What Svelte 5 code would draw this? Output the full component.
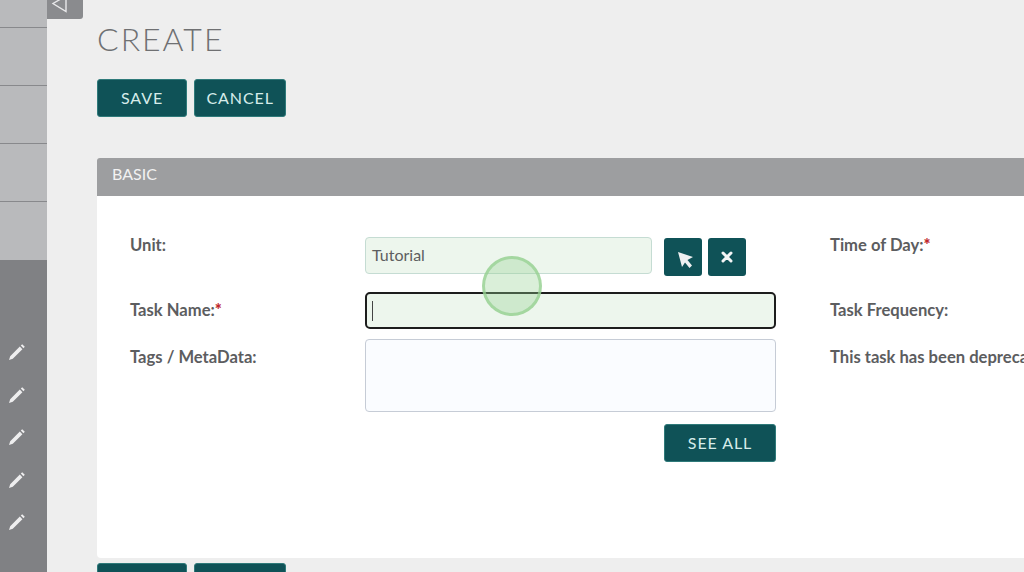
<script>
	const navItems = [28, 58, 58, 58, 58]
	const pencils = [1, 2, 3, 4, 5]
	const actions = ['SAVE', 'CANCEL']
</script>

<div class="page">
	<aside class="sidebar">
		<div class="nav">
			{#each navItems as h}
				<div class="nav-item" style="height: {h}px"></div>
			{/each}
		</div>
		<div class="tools">
			{#each pencils as p}
				<svg class="pencil" viewBox="0 0 18 18" width="18" height="18">
					<path d="M1 17 L2.2 13.2 L11.8 3.6 L14.4 6.2 L4.8 15.8 Z M12.8 2.6 L14.2 1.2 L16.8 3.8 L15.4 5.2 Z" fill="#eeeeef" />
				</svg>
			{/each}
		</div>
	</aside>

	<button class="collapse" aria-label="collapse">
		<svg viewBox="0 0 22 20" width="22" height="20">
			<path d="M18 -4 L18 11.5 L5 3.5 Z" fill="none" stroke="#e8e8ea" stroke-width="1.4" />
		</svg>
	</button>

	<main class="content">
		<h1>CREATE</h1>
		<div class="actions">
			{#each actions as a}
				<button class="btn" class:save={a === 'SAVE'}>{a}</button>
			{/each}
		</div>

		<section class="panel">
			<header>BASIC</header>
			<div class="body">
				<div class="col-left">
					<div class="row unit">
						<span class="label">Unit:</span>
						<div class="field input-short">Tutorial</div>
						<button class="icon-btn first" aria-label="select">
							<svg viewBox="0 0 24 24" width="24" height="24">
								<path d="M7 7 L22 12 L16.5 15 L21 20.5 L18.5 23 L14 17.5 L11 22 Z" fill="#eef0f1" />
							</svg>
						</button>
						<button class="icon-btn" aria-label="clear">
							<svg viewBox="0 0 12 12" width="12" height="12">
								<path d="M2 2 L10 10 M10 2 L2 10" stroke="#f4f5f5" stroke-width="3" stroke-linecap="round" />
							</svg>
						</button>
					</div>
					<div class="row name">
						<span class="label">Task Name:<b>*</b></span>
						<div class="field input-focus"><i class="caret"></i></div>
					</div>
					<div class="row tags">
						<span class="label">Tags / MetaData:</span>
						<div class="field textarea"></div>
					</div>
					<div class="see-all"><button class="btn wide">SEE ALL</button></div>
				</div>
				<div class="col-right">
					<span class="label time">Time of Day:<b>*</b></span>
					<span class="label freq">Task Frequency:</span>
					<span class="label dep">This task has been deprecated</span>
				</div>
			</div>
		</section>

		<div class="actions bottom">
			{#each actions as a}
				<button class="btn" class:save={a === 'SAVE'}>{a}</button>
			{/each}
		</div>
	</main>

	<div class="click-dot"></div>
</div>

<style>
	:global(body) {
		margin: 0;
		background: #eeeeee;
	}
	.page {
		position: relative;
		display: flex;
		width: 1024px;
		height: 572px;
		overflow: hidden;
		font-family: Lato, "Open Sans", sans-serif;
		background: #eeeeee;
	}
	.sidebar {
		width: 47px;
		flex: none;
		display: flex;
		flex-direction: column;
		background: #808184;
	}
	.nav-item {
		box-sizing: border-box;
		background: #b9babc;
		border-bottom: 1px solid #88898c;
	}
	.nav-item:last-child {
		border-bottom: 0;
	}
	.tools {
		display: flex;
		flex-direction: column;
		align-items: center;
		gap: 24.5px;
		padding: 83px 13px 0 0;
	}
	.pencil {
		display: block;
	}
	.collapse {
		position: absolute;
		left: 47px;
		top: 0;
		width: 36px;
		height: 19px;
		padding: 0;
		border: 0;
		border-radius: 0 0 3px 0;
		background: #8a8b8e;
		overflow: hidden;
	}
	.collapse svg {
		display: block;
		margin-left: 1px;
	}
	.content {
		flex: 1;
		min-width: 0;
		padding: 0 0 0 50px;
	}
	h1 {
		margin: 0;
		padding-top: 19px;
		height: 79px;
		box-sizing: border-box;
		font-size: 32px;
		line-height: 40px;
		font-weight: 300;
		letter-spacing: 2px;
		color: #6f7072;
	}
	.actions {
		display: flex;
		gap: 7px;
	}
	.btn {
		height: 38px;
		padding: 0 11.5px 2px;
		border: 1px solid #2f7a7a;
		border-radius: 3px;
		background: #0f5257;
		color: #d6ecea;
		font-family: inherit;
		font-size: 16px;
		letter-spacing: 0.9px;
	}
	.btn.save {
		width: 90px;
	}
	.btn.wide {
		width: 112px;
	}
	.panel {
		width: 1000px;
		margin-top: 41px;
	}
	.panel header {
		height: 38px;
		box-sizing: border-box;
		padding: 7px 15px 0;
		background: #9d9ea0;
		border-radius: 3px 3px 0 0;
		color: #f2f2f2;
		font-size: 16px;
		line-height: 18px;
	}
	.body {
		display: flex;
		height: 362px;
		box-sizing: border-box;
		padding: 41px 0 0 33px;
		background: #ffffff;
		border-radius: 0 0 4px 4px;
	}
	.col-left {
		width: 646px;
		flex: none;
		display: flex;
		flex-direction: column;
		position: relative;
	}
	.col-right {
		display: flex;
		flex-direction: column;
		padding-left: 54px;
		margin-top: -2px;
		white-space: nowrap;
	}
	.label {
		font-size: 16.6px;
		line-height: 20px;
		font-weight: 700;
		color: #5c5d5f;
		white-space: nowrap;
	}
	.label b {
		color: #c0272d;
	}
	.col-left .label {
		width: 235px;
		flex: none;
	}
	.col-right .freq {
		margin-top: 45px;
	}
	.col-right .dep {
		margin-top: 27px;
	}
	.row {
		display: flex;
		align-items: flex-start;
	}
	.row.name {
		height: 47px;
	}
	.row.tags {
		height: 85px;
	}
	.row.unit {
		height: 55px;
	}
	.unit .label {
		margin-top: -2px;
	}
	.name .label {
		margin-top: 8px;
	}
	.tags .label {
		margin-top: 8px;
	}
	.field {
		box-sizing: border-box;
		border-radius: 4px;
	}
	.input-short {
		width: 287px;
		height: 37px;
		padding: 0 6px;
		border: 1px solid #c5dcd3;
		background: #edf6ed;
		color: #5d5e60;
		font-size: 16px;
		line-height: 34px;
	}
	.icon-btn {
		width: 38px;
		height: 38px;
		margin-top: 1px;
		margin-left: 6px;
		padding: 0;
		display: flex;
		align-items: center;
		justify-content: center;
		border: 0;
		border-radius: 3px;
		background: #0f5257;
	}
	.icon-btn.first {
		margin-left: 12px;
	}
	.input-focus {
		width: 411px;
		height: 37px;
		border: 2.5px solid #1d1d1d;
		background: #edf6ed;
		border-radius: 5px;
		padding: 7px 5px;
	}
	.caret {
		display: block;
		width: 1px;
		height: 20px;
		background: #444444;
	}
	.textarea {
		width: 411px;
		height: 73px;
		border: 1px solid #c6ccd6;
		background: #fafcff;
	}
	.see-all {
		display: flex;
		justify-content: flex-end;
		width: 646px;
	}
	.bottom {
		margin-top: 5px;
	}
	.click-dot {
		position: absolute;
		left: 482px;
		top: 256px;
		width: 60px;
		height: 60px;
		box-sizing: border-box;
		border-radius: 50%;
		border: 3px solid rgba(150, 208, 145, 0.75);
		background: rgba(150, 208, 145, 0.35);
	}
</style>
